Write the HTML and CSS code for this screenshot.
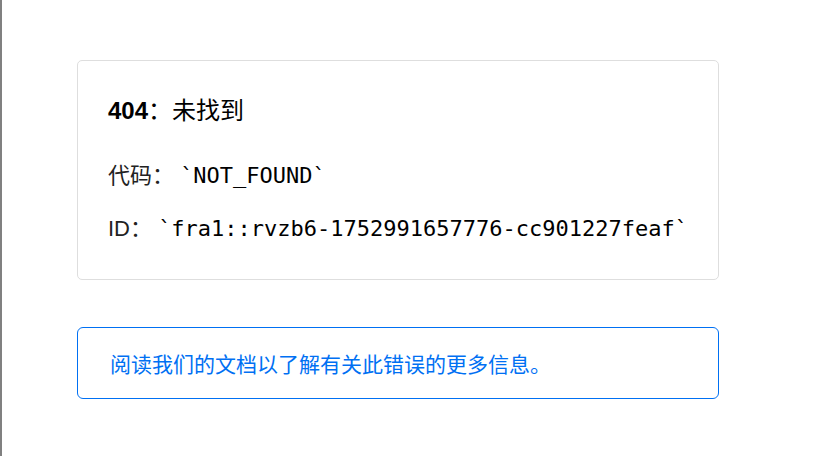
FILE: index.html
```html
<!DOCTYPE html>
<html lang="zh-CN">
<head>
<meta charset="utf-8">
<title>404：未找到</title>
<link rel="stylesheet" href="styles.css">
</head>
<body>
<div class="page">
  <main class="info-card">
    <p class="title"><strong>404</strong>：未找到</p>
    <p class="line">代码： <code>`NOT_FOUND`</code></p>
    <p class="line line-id">ID： <code>`fra1::rvzb6-1752991657776-cc901227feaf`</code></p>
  </main>
  <a class="docs-card" href="#">阅读我们的文档以了解有关此错误的更多信息。</a>
</div>
</body>
</html>
```

FILE: styles.css
```css
html {
  min-height: 100%;
  box-sizing: border-box;
  border-left: 2px solid #808080;
  background: #fff;
}

body {
  margin: 0;
  font-family: "Liberation Sans", "Noto Sans CJK SC", sans-serif;
  color: #111;
}

.page {
  display: flex;
  flex-direction: column;
  align-items: flex-start;
  gap: 47px;
  padding: 60px 0 0 75px;
}

.info-card {
  box-sizing: border-box;
  width: 642px;
  border: 1px solid #dedede;
  border-radius: 5px;
  padding: 34px 30px 34px;
  display: flex;
  flex-direction: column;
}

.title,
.line {
  margin: 0;
  font-size: 22px;
  line-height: 32px;
  color: #222;
}

.title {
  font-size: 24px;
  color: #000;
}

.title strong {
  font-weight: 700;
}

.line {
  margin-top: 33px;
}

.line-id {
  margin-top: 21px;
}

code {
  font-family: "DejaVu Sans Mono", "Liberation Mono", monospace;
  font-size: 22px;
  color: #000;
}

.docs-card {
  box-sizing: border-box;
  width: 642px;
  height: 72px;
  border: 1px solid #0070f3;
  border-radius: 6px;
  padding: 0 32px;
  display: flex;
  align-items: center;
  font-size: 21px;
  color: #0070f3;
  text-decoration: none;
}
```
